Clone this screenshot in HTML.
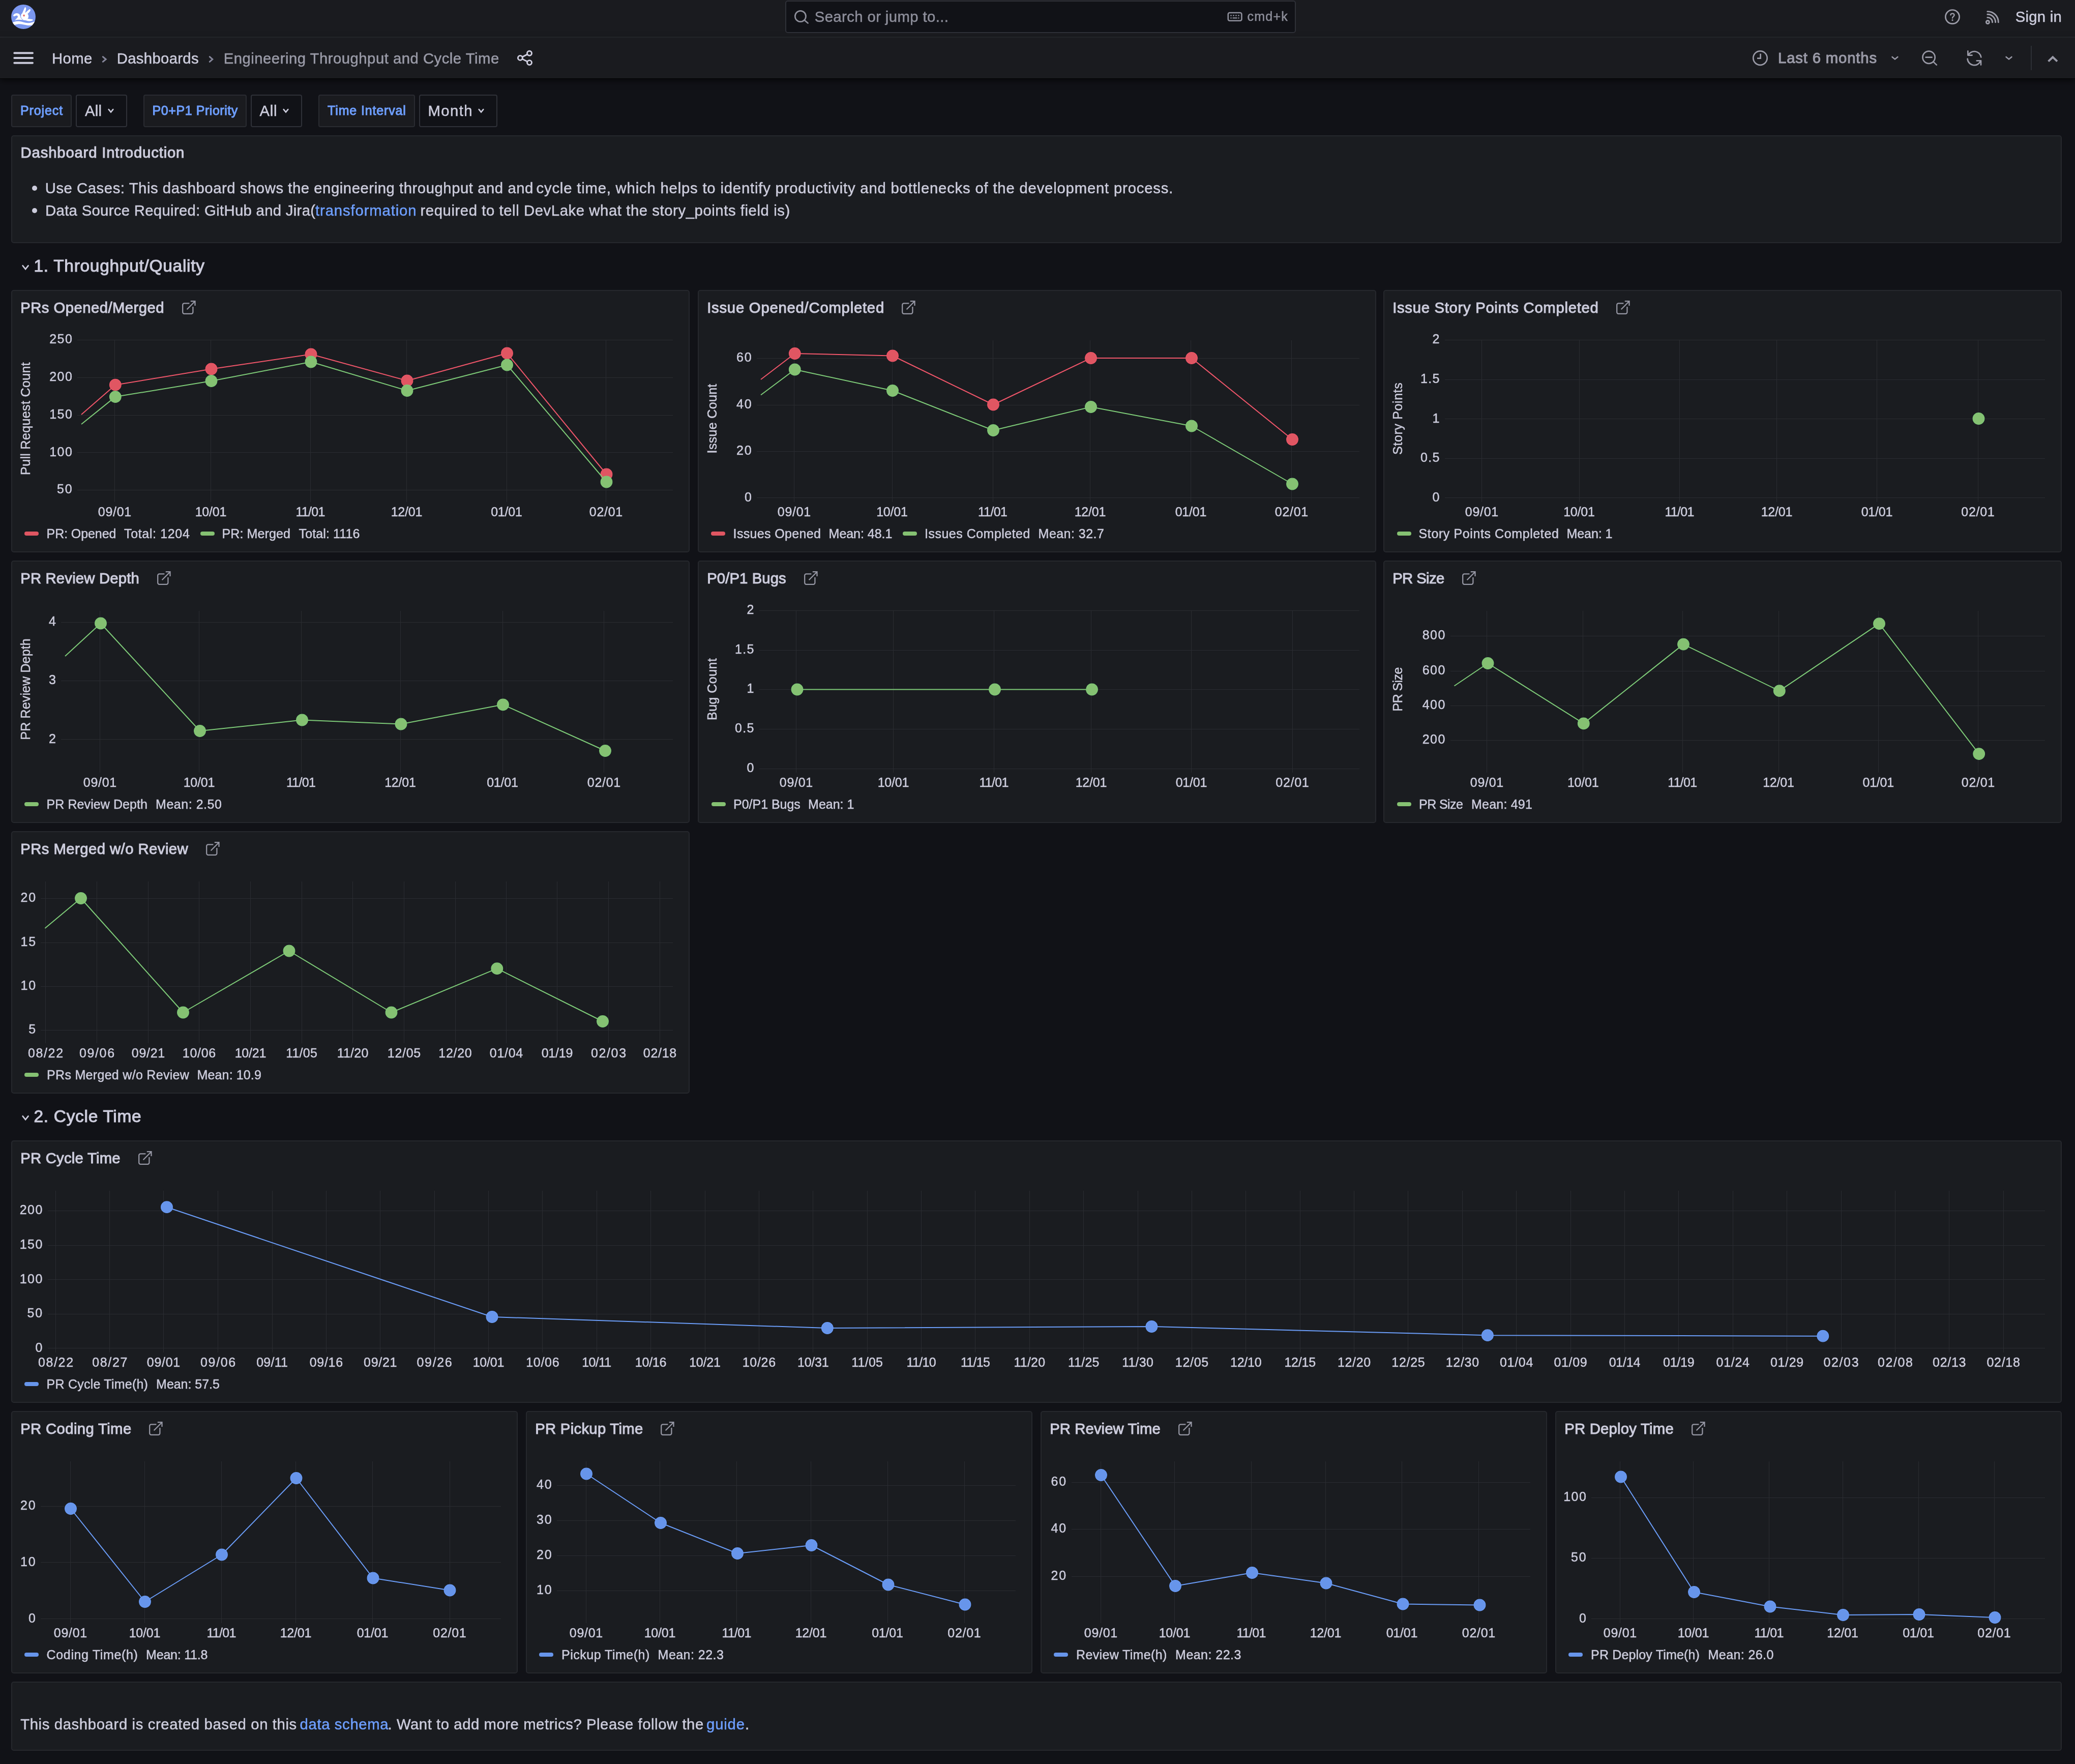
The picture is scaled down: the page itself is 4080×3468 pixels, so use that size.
<!DOCTYPE html>
<html lang="en"><head><meta charset="utf-8"><title>Engineering Throughput and Cycle Time - Dashboards - Grafana</title>
<meta name="viewport" content="width=4080">
<style>
html,body{margin:0;padding:0;background:#111217;}
body{width:4080px;height:3468px;overflow:hidden;position:relative;font-family:"Liberation Sans", sans-serif;color:#ccccdc;}
#app{position:absolute;left:0;top:0;width:4080px;height:3468px;overflow:hidden;will-change:transform;}
#app *{box-sizing:border-box;}
header,nav,section,.vars,.vl,.vv,.row,.search{position:absolute;}
.t{position:absolute;white-space:pre;margin:0;padding:0;font-weight:400;font-style:normal;-webkit-text-stroke:0.5px currentColor;}
.t.m{-webkit-text-stroke:1.05px currentColor;}
.ic,.g{position:absolute;overflow:visible;}
.g{left:0;top:0;}
.topbar{background:#1a1b1f;border-bottom:2px solid #27292e;}
.subbar{background:#1a1b1f;box-shadow:0 1px 0 #030304,0 5px 12px rgba(0,0,0,.6);}
.search{background:#111217;border:2px solid #2f3138;border-radius:5px;}
.panel{background:#1a1c20;border:2px solid #26282d;border-radius:5px;}
.vl{background:#1a1b1f;border:2px solid #292b31;border-radius:4px;}
.vv{background:#111217;border:2px solid #2f3138;border-radius:4px;}
.sw{position:absolute;width:28px;height:8px;border-radius:4px;}
.bul{position:absolute;width:10px;height:10px;border-radius:50%;background:#ccccdc;}
.vsep{position:absolute;width:2px;height:48px;background:#2d2f35;}
a.t{text-decoration:none;}
h2.t{font-size:inherit;}
</style></head>
<body><div id="app">
<header class="topbar" style="left:0px;top:0px;width:4080px;height:74px;">
<svg class="ic" style="left:22px;top:9px" width="48" height="48" viewBox="0 0 48 48">
<defs><clipPath id="lc"><circle cx="24" cy="24" r="24"/></clipPath></defs>
<circle cx="24" cy="24" r="24" fill="#7b97ef"/>
<g clip-path="url(#lc)" fill="#fff">
<path d="M21.6 17.2 L26.3 6.4 C27 4.6 28.6 5.2 29.1 6.8 C29.6 9 28.6 12.6 26.9 16.6 Z"/>
<path d="M27 16.8 L35.4 9.6 C37 8.4 38.4 9.6 37.8 11.4 C37 13.6 34.6 16 32 18.6 Z"/>
<ellipse cx="26.4" cy="23" rx="7.8" ry="7.4"/>
<path d="M4.2 20.8 C5.4 18.2 8.4 16.8 11.4 16.9 C14.6 17 17 18.8 17.4 21.6 C17.8 24.6 19.4 27.4 22.6 29.2 L26 27.6 L32.4 27.8 L42 29.2 C43 29.6 43 30.8 42 31.2 C38 32.8 34 32.8 30 31.6 C24 29.8 13.6 28.8 7.2 31 L12.6 25.2 C13.6 23.8 13 22 11 21.6 C9.4 21.4 8 22.4 6.8 23 C5 23.6 3.6 22.4 4.2 20.8 Z"/>
<path d="M1 36.4 C5 33.4 10.4 32.2 15.6 32.8 C21.6 33.6 27.4 36.4 33.4 36.2 C38 36 42.4 35 47 33 L47.5 39.4 C42.6 41 37 41.4 32 40.8 C25.6 40 19.4 37.6 13 38.4 C9.6 38.8 6.6 39.8 4 41 Z"/>
</g>
<path d="M19.07 20.47A7.8 7.4 0 0 0 23.1 29.71" fill="none" stroke="#7b97ef" stroke-width=".9"/>
<circle cx="25.1" cy="21.5" r="1.9" fill="#e8716f"/>
</svg>
<div class="search" style="left:1544px;top:1px;width:1004px;height:64px;">
<svg class="ic" style="left:10px;top:13px" width="40" height="36" viewBox="1556 16 40 36" ><path d="M1584.5 32A10.6 10.6 0 1 1 1563.3 32A10.6 10.6 0 1 1 1584.5 32M1581.6 39.4L1588.6 45.4" fill="none" stroke="#8e8f9b" stroke-width="2.7" stroke-linecap="round" stroke-linejoin="round" /></svg>
<span class="t" style="left:55.7px;top:12.4px;font-size:29.3px;line-height:35px;letter-spacing:0.40px;color:#8d8e9a;">Search or jump to...</span>
<svg class="ic" style="left:864px;top:17px" width="36" height="26" viewBox="2410 20 36 26" ><rect x="2414.8" y="25" width="26.6" height="15.8" rx="3" fill="none" stroke="#8e8f9b" stroke-width="2.6"/><rect x="2419.2" y="29.3" width="2.6" height="2.4" rx=".6" fill="#8e8f9b"/><rect x="2424.2" y="29.3" width="2.6" height="2.4" rx=".6" fill="#8e8f9b"/><rect x="2429.2" y="29.3" width="2.6" height="2.4" rx=".6" fill="#8e8f9b"/><rect x="2434.2" y="29.3" width="2.6" height="2.4" rx=".6" fill="#8e8f9b"/><rect x="2419.2" y="34.2" width="2.6" height="2.4" rx=".6" fill="#8e8f9b"/><rect x="2434.2" y="34.2" width="2.6" height="2.4" rx=".6" fill="#8e8f9b"/><rect x="2423.4" y="34.2" width="9.4" height="2.4" rx="1" fill="#8e8f9b"/></svg>
<span class="t" style="left:906.5px;top:14.2px;font-size:25.0px;line-height:30px;letter-spacing:1.25px;color:#8d8e9a;">cmd+k</span>
</div>
<svg class="ic" style="left:3820px;top:14px" width="38" height="38" viewBox="3820 14 38 38" ><circle cx="3839" cy="33.1" r="13.6" fill="none" stroke="#9c9ca8" stroke-width="2.7"/><path d="M3835.5 29.4C3835.5 25.6 3842.6 25.6 3842.6 29.7C3842.6 32.4 3839 32.5 3839 35.6" fill="none" stroke="#9c9ca8" stroke-width="2.4" stroke-linecap="round" stroke-linejoin="round" /><circle cx="3839" cy="39.6" r="1.55" fill="#9c9ca8"/></svg>
<svg class="ic" style="left:3900px;top:18px" width="36" height="34" viewBox="3900 18 36 34" ><circle cx="3908.4" cy="43.5" r="3" fill="none" stroke="#9c9ca8" stroke-width="2.9"/><path d="M3907.8 34.4A9.1 9.1 0 0 1 3917.5 43.9" fill="none" stroke="#9c9ca8" stroke-width="2.9" stroke-linecap="round" stroke-linejoin="round" /><path d="M3907.8 28.3A15.2 15.2 0 0 1 3923.6 43.9" fill="none" stroke="#9c9ca8" stroke-width="2.9" stroke-linecap="round" stroke-linejoin="round" /><path d="M3907.8 22.6A20.9 20.9 0 0 1 3929.3 43.9" fill="none" stroke="#9c9ca8" stroke-width="2.9" stroke-linecap="round" stroke-linejoin="round" /></svg>
<span class="t" style="left:3962.7px;top:14.9px;font-size:29.3px;line-height:35px;letter-spacing:0.26px;">Sign in</span>
</header>
<nav class="subbar" style="left:0px;top:74px;width:4080px;height:80px;">
<svg class="ic" style="left:24px;top:24px" width="46" height="32" viewBox="24 98 46 32" ><path d="M28.3 104.3H64M28.3 114H64M28.3 123.8H64" fill="none" stroke="#c9c9d9" stroke-width="4" stroke-linecap="round" stroke-linejoin="round" /></svg>
<span class="t" style="left:102.1px;top:22.6px;font-size:29.3px;line-height:35px;letter-spacing:0.33px;">Home</span>
<svg class="ic" style="left:198px;top:32px" width="16" height="20" viewBox="198 106 16 20" ><path d="M202.3 111.6L208.2 116.5L202.3 121.4" fill="none" stroke="#85869a" stroke-width="3" stroke-linecap="round" stroke-linejoin="miter"/></svg>
<span class="t" style="left:229.7px;top:22.6px;font-size:29.3px;line-height:35px;letter-spacing:0.33px;">Dashboards</span>
<svg class="ic" style="left:407px;top:32px" width="16" height="20" viewBox="407 106 16 20" ><path d="M412.3 111.6L417.8 116.5L412.3 121.4" fill="none" stroke="#85869a" stroke-width="3" stroke-linecap="round" stroke-linejoin="miter"/></svg>
<span class="t" style="left:439.7px;top:22.6px;font-size:29.3px;line-height:35px;letter-spacing:0.49px;color:#9a9ba8;">Engineering Throughput and Cycle Time</span>
<svg class="ic" style="left:1014px;top:22px" width="36" height="36" viewBox="1014 96 36 36" ><circle cx="1041" cy="104.8" r="4.5" fill="none" stroke="#d0cfe0" stroke-width="2.9"/><circle cx="1022.9" cy="113.9" r="4.5" fill="none" stroke="#d0cfe0" stroke-width="2.9"/><circle cx="1041" cy="123.1" r="4.5" fill="none" stroke="#d0cfe0" stroke-width="2.9"/><path d="M1027 111.9L1036.9 106.9M1027 116L1036.9 121" fill="none" stroke="#d0cfe0" stroke-width="2.9" stroke-linecap="round" stroke-linejoin="round" /></svg>
<svg class="ic" style="left:3444px;top:22px" width="36" height="36" viewBox="3444 96 36 36" ><circle cx="3461" cy="114.1" r="13.7" fill="none" stroke="#9a9aa7" stroke-width="2.7"/><path d="M3461.6 105.6V114.6H3455" fill="none" stroke="#9a9aa7" stroke-width="2.7"/></svg>
<span class="t m" style="left:3496.1px;top:22.4px;font-size:29.3px;line-height:35px;letter-spacing:0.83px;color:#9a9aa7;">Last 6 months</span>
<svg class="ic" style="left:3714px;top:32px" width="24" height="16" viewBox="3714 106 24 16" ><path d="M3720.6 111.9L3725.95 116.4L3731.3 111.9" fill="none" stroke="#9a9aa7" stroke-width="2.6" stroke-linecap="round" stroke-linejoin="miter"/></svg>
<svg class="ic" style="left:3776px;top:22px" width="36" height="36" viewBox="3776 96 36 36" ><circle cx="3792.6" cy="112.7" r="12.1" fill="none" stroke="#9a9aa7" stroke-width="2.7"/><path d="M3786.6 112.7H3798.6M3801.6 121.6L3807.8 127.6" fill="none" stroke="#9a9aa7" stroke-width="2.7" stroke-linecap="round" stroke-linejoin="round" /></svg>
<svg class="ic" style="left:3864px;top:22px" width="36" height="36" viewBox="3864 96 36 36" ><path d="M3869.4 100.4V108.6H3877.6" fill="none" stroke="#9a9aa7" stroke-width="2.7" stroke-linecap="round" stroke-linejoin="round" /><path d="M3895 127.6V119.4H3886.8" fill="none" stroke="#9a9aa7" stroke-width="2.7" stroke-linecap="round" stroke-linejoin="round" /><path d="M3870.2 108.2A13.4 13.4 0 0 1 3895.3 112.4" fill="none" stroke="#9a9aa7" stroke-width="2.7" stroke-linecap="round" stroke-linejoin="round" /><path d="M3868.6 115.6A13.4 13.4 0 0 0 3894.4 119.8" fill="none" stroke="#9a9aa7" stroke-width="2.7" stroke-linecap="round" stroke-linejoin="round" /></svg>
<svg class="ic" style="left:3938px;top:32px" width="24" height="16" viewBox="3938 106 24 16" ><path d="M3944.6 111.9L3950 116.4L3955.4 111.9" fill="none" stroke="#9a9aa7" stroke-width="2.6" stroke-linecap="round" stroke-linejoin="miter"/></svg>
<i class="vsep" style="left:3992.5px;top:16px"></i>
<svg class="ic" style="left:4022px;top:30px" width="30" height="24" viewBox="4022 104 30 24" ><path d="M4027.6 120.6L4036.3 112.2L4045 120.6" fill="none" stroke="#9a9aa7" stroke-width="4" stroke-linejoin="miter"/></svg>
</nav>
<div class="vars" style="left:0px;top:186px;width:4080px;height:64px;">
<div class="vl" style="left:22px;top:0px;width:119px;height:64px;">
<span class="t m" style="left:16.0px;top:13.9px;font-size:25.0px;line-height:30px;letter-spacing:0.89px;color:#6e9fff;">Project</span>
</div>
<div class="vv" style="left:149px;top:0px;width:101px;height:64px;">
<span class="t" style="left:16.0px;top:12.3px;font-size:29.3px;line-height:35px;letter-spacing:0.24px;">All</span>
<svg class="ic" style="left:57px;top:20px" width="20" height="18" viewBox="208 208 20 18" ><path d="M213.7 215.1L218 220.4L222.3 215.1" fill="none" stroke="#ccccdc" stroke-width="2.6" stroke-linecap="round" stroke-linejoin="miter"/></svg>
</div>
<div class="vl" style="left:282px;top:0px;width:203px;height:64px;">
<span class="t m" style="left:15.6px;top:13.9px;font-size:25.0px;line-height:30px;letter-spacing:0.56px;color:#6e9fff;">P0+P1 Priority</span>
</div>
<div class="vv" style="left:493px;top:0px;width:101px;height:64px;">
<span class="t" style="left:15.5px;top:12.3px;font-size:29.3px;line-height:35px;letter-spacing:0.74px;">All</span>
<svg class="ic" style="left:57px;top:20px" width="20" height="18" viewBox="552 208 20 18" ><path d="M557.7 215.1L562 220.4L566.3 215.1" fill="none" stroke="#ccccdc" stroke-width="2.6" stroke-linecap="round" stroke-linejoin="miter"/></svg>
</div>
<div class="vl" style="left:626px;top:0px;width:190px;height:64px;">
<span class="t m" style="left:16.1px;top:13.9px;font-size:25.0px;line-height:30px;letter-spacing:0.85px;color:#6e9fff;">Time Interval</span>
</div>
<div class="vv" style="left:824px;top:0px;width:154px;height:64px;">
<span class="t" style="left:15.5px;top:12.3px;font-size:29.3px;line-height:35px;letter-spacing:1.40px;">Month</span>
<svg class="ic" style="left:110px;top:20px" width="20" height="18" viewBox="936 208 20 18" ><path d="M941.7 215.1L946 220.4L950.3 215.1" fill="none" stroke="#ccccdc" stroke-width="2.6" stroke-linecap="round" stroke-linejoin="miter"/></svg>
</div>
</div>
<section class="panel" style="left:22px;top:266px;width:4032px;height:212px;">
<h2 class="t m pt" style="left:16.6px;top:14.2px;font-size:29.3px;line-height:35px;letter-spacing:0.82px;">Dashboard Introduction</h2>
<i class="bul" style="left:39px;top:97.2px"></i>
<i class="bul" style="left:39px;top:141.3px"></i>
<span class="t" style="left:64.7px;top:84.1px;font-size:29.3px;line-height:35px;letter-spacing:0.54px;">Use Cases: This dashboard shows the engineering throughput and and</span>
<span class="t" style="left:1030.5px;top:84.1px;font-size:29.3px;line-height:35px;letter-spacing:0.80px;">cycle time, which helps to identify productivity and bottlenecks of the development process.</span>
<span class="t" style="left:65.1px;top:127.9px;font-size:29.3px;line-height:35px;letter-spacing:0.31px;">Data Source Required: GitHub and Jira(</span>
<a class="t" href="#" style="left:596.0px;top:127.9px;font-size:29.3px;line-height:35px;letter-spacing:0.87px;color:#6e9fff;">transformation</a>
<span class="t" style="left:802.5px;top:127.9px;font-size:29.3px;line-height:35px;letter-spacing:0.57px;">required to tell DevLake what the story_points field is)</span>
</section>
<div class="row" style="left:22px;top:494px;width:4032px;height:60px;">
<svg class="ic" style="left:16px;top:22px" width="24" height="20" viewBox="38 516 24 20" ><path d="M44.7 522.3L50.1 529L55.5 522.3" fill="none" stroke="#ccccdc" stroke-width="2.7" stroke-linecap="round" stroke-linejoin="miter"/></svg>
<span class="t m" style="left:44.4px;top:9.1px;font-size:33.5px;line-height:40px;letter-spacing:0.70px;">1. Throughput/Quality</span>
</div>
<section class="panel" style="left:22px;top:570px;width:1334px;height:516px;">
<h2 class="t m pt" style="left:16.2px;top:14.6px;font-size:29.3px;line-height:35px;letter-spacing:0.45px;">PRs Opened/Merged</h2>
<svg class="ic" style="left:333.7px;top:18.6px" width="28" height="28" viewBox="0 0 28 28"><path d="M14.4 5.4H4.3A3.1 3.1 0 0 0 1.2 8.5V22.7A3.1 3.1 0 0 0 4.3 25.8H18.3A3.1 3.1 0 0 0 21.4 22.7V11.9M16.8 1.2H25.5V9.9M25.5 1.2L9.6 17.3" fill="none" stroke="#9697a4" stroke-width="2.25" stroke-linejoin="miter"/></svg>
<svg class="g" width="1330" height="512" viewBox="24 572 1330 512" ><path d="M152 668.5H1322.5M152 742.5H1322.5M152 816.5H1322.5M152 889.5H1322.5M152 963.5H1322.5M225.5 668.5V986.5M414.5 668.5V986.5M610.5 668.5V986.5M799.5 668.5V986.5M996.5 668.5V986.5M1191.5 668.5V986.5" stroke="#2a2c31" stroke-width="1" fill="none" shape-rendering="crispEdges"/><path d="M160 815L226.8 756.7L415.5 725.5L611.5 696.5L800.5 748.5L997 694.5L1192.5 932.5" stroke="#f0566a" stroke-width="2" fill="none" stroke-linejoin="round"/><circle cx="226.8" cy="756.7" r="11.3" fill="#e05662" stroke="#f0566a" stroke-width="1.2"/><circle cx="415.5" cy="725.5" r="11.3" fill="#e05662" stroke="#f0566a" stroke-width="1.2"/><circle cx="611.5" cy="696.5" r="11.3" fill="#e05662" stroke="#f0566a" stroke-width="1.2"/><circle cx="800.5" cy="748.5" r="11.3" fill="#e05662" stroke="#f0566a" stroke-width="1.2"/><circle cx="997" cy="694.5" r="11.3" fill="#e05662" stroke="#f0566a" stroke-width="1.2"/><circle cx="1192.5" cy="932.5" r="11.3" fill="#e05662" stroke="#f0566a" stroke-width="1.2"/><path d="M160 834L226.8 780.1L415.5 749L611.5 711.5L800.5 768L997 717.5L1192.5 947.5" stroke="#7ecb78" stroke-width="2" fill="none" stroke-linejoin="round"/><circle cx="226.8" cy="780.1" r="11.3" fill="#85c172" stroke="#7ecb78" stroke-width="1.2"/><circle cx="415.5" cy="749" r="11.3" fill="#85c172" stroke="#7ecb78" stroke-width="1.2"/><circle cx="611.5" cy="711.5" r="11.3" fill="#85c172" stroke="#7ecb78" stroke-width="1.2"/><circle cx="800.5" cy="768" r="11.3" fill="#85c172" stroke="#7ecb78" stroke-width="1.2"/><circle cx="997" cy="717.5" r="11.3" fill="#85c172" stroke="#7ecb78" stroke-width="1.2"/><circle cx="1192.5" cy="947.5" r="11.3" fill="#85c172" stroke="#7ecb78" stroke-width="1.2"/></svg>
<span class="t" style="left:73.2px;top:79.3px;font-size:25.0px;line-height:30px;letter-spacing:1.46px;">250</span>
<span class="t" style="left:73.2px;top:153.0px;font-size:25.0px;line-height:30px;letter-spacing:1.46px;">200</span>
<span class="t" style="left:73.2px;top:226.8px;font-size:25.0px;line-height:30px;letter-spacing:1.46px;">150</span>
<span class="t" style="left:73.2px;top:300.5px;font-size:25.0px;line-height:30px;letter-spacing:1.46px;">100</span>
<span class="t" style="left:88.0px;top:374.2px;font-size:25.0px;line-height:30px;letter-spacing:1.95px;">50</span>
<span class="t" style="left:168.8px;top:419.4px;font-size:25.0px;line-height:30px;letter-spacing:0.70px;">09/01</span>
<span class="t" style="left:359.7px;top:419.4px;font-size:25.0px;line-height:30px;letter-spacing:-0.23px;">10/01</span>
<span class="t" style="left:557.5px;top:419.4px;font-size:25.0px;line-height:30px;letter-spacing:-0.69px;">11/01</span>
<span class="t" style="left:744.7px;top:419.4px;font-size:25.0px;line-height:30px;letter-spacing:-0.23px;">12/01</span>
<span class="t" style="left:941.2px;top:419.4px;font-size:25.0px;line-height:30px;letter-spacing:-0.23px;">01/01</span>
<span class="t" style="left:1134.8px;top:419.4px;font-size:25.0px;line-height:30px;letter-spacing:0.70px;">02/01</span>
<span class="t" style="left:-84.9px;top:236.0px;width:221.8px;font-size:25.0px;line-height:30px;letter-spacing:0.37px;transform:rotate(-90deg);">Pull Request Count</span>
<i class="sw" style="left:23.8px;top:473px;background:#e05662"></i>
<span class="t" style="left:67.6px;top:461.6px;font-size:25.0px;line-height:30px;letter-spacing:-0.09px;">PR: Opened</span>
<span class="t" style="left:220.1px;top:461.6px;font-size:25.0px;line-height:30px;letter-spacing:0.64px;">Total: 1204</span>
<i class="sw" style="left:369.5px;top:473px;background:#85c172"></i>
<span class="t" style="left:412.6px;top:461.6px;font-size:25.0px;line-height:30px;letter-spacing:0.10px;">PR: Merged</span>
<span class="t" style="left:563.6px;top:461.6px;font-size:25.0px;line-height:30px;letter-spacing:0.11px;">Total: 1116</span>
</section>
<section class="panel" style="left:1372px;top:570px;width:1334px;height:516px;">
<h2 class="t m pt" style="left:16.2px;top:14.6px;font-size:29.3px;line-height:35px;letter-spacing:0.75px;">Issue Opened/Completed</h2>
<svg class="ic" style="left:399.4px;top:18.6px" width="28" height="28" viewBox="0 0 28 28"><path d="M14.4 5.4H4.3A3.1 3.1 0 0 0 1.2 8.5V22.7A3.1 3.1 0 0 0 4.3 25.8H18.3A3.1 3.1 0 0 0 21.4 22.7V11.9M16.8 1.2H25.5V9.9M25.5 1.2L9.6 17.3" fill="none" stroke="#9697a4" stroke-width="2.25" stroke-linejoin="miter"/></svg>
<svg class="g" width="1330" height="512" viewBox="1374 572 1330 512" ><path d="M1488 704.5H2673M1488 796.5H2673M1488 887.5H2673M1488 978.5H2673M1561.5 668.5V986.5M1754.5 668.5V986.5M1952.5 668.5V986.5M2143.5 668.5V986.5M2341.5 668.5V986.5M2539.5 668.5V986.5" stroke="#2a2c31" stroke-width="1" fill="none" shape-rendering="crispEdges"/><path d="M1496 746L1562.8 695L1755 699.5L1953 795.5L2145 704L2343 704L2541 864" stroke="#f0566a" stroke-width="2" fill="none" stroke-linejoin="round"/><circle cx="1562.8" cy="695" r="11.3" fill="#e05662" stroke="#f0566a" stroke-width="1.2"/><circle cx="1755" cy="699.5" r="11.3" fill="#e05662" stroke="#f0566a" stroke-width="1.2"/><circle cx="1953" cy="795.5" r="11.3" fill="#e05662" stroke="#f0566a" stroke-width="1.2"/><circle cx="2145" cy="704" r="11.3" fill="#e05662" stroke="#f0566a" stroke-width="1.2"/><circle cx="2343" cy="704" r="11.3" fill="#e05662" stroke="#f0566a" stroke-width="1.2"/><circle cx="2541" cy="864" r="11.3" fill="#e05662" stroke="#f0566a" stroke-width="1.2"/><path d="M1496 776.5L1562.8 726.5L1755 768L1953 846L2145 800L2343 837.5L2541 951.5" stroke="#7ecb78" stroke-width="2" fill="none" stroke-linejoin="round"/><circle cx="1562.8" cy="726.5" r="11.3" fill="#85c172" stroke="#7ecb78" stroke-width="1.2"/><circle cx="1755" cy="768" r="11.3" fill="#85c172" stroke="#7ecb78" stroke-width="1.2"/><circle cx="1953" cy="846" r="11.3" fill="#85c172" stroke="#7ecb78" stroke-width="1.2"/><circle cx="2145" cy="800" r="11.3" fill="#85c172" stroke="#7ecb78" stroke-width="1.2"/><circle cx="2343" cy="837.5" r="11.3" fill="#85c172" stroke="#7ecb78" stroke-width="1.2"/><circle cx="2541" cy="951.5" r="11.3" fill="#85c172" stroke="#7ecb78" stroke-width="1.2"/></svg>
<span class="t" style="left:74.0px;top:115.1px;font-size:25.0px;line-height:30px;letter-spacing:1.95px;">60</span>
<span class="t" style="left:74.0px;top:206.8px;font-size:25.0px;line-height:30px;letter-spacing:1.95px;">40</span>
<span class="t" style="left:74.0px;top:298.3px;font-size:25.0px;line-height:30px;letter-spacing:1.95px;">20</span>
<span class="t" style="left:89.9px;top:389.5px;font-size:25.0px;line-height:30px;letter-spacing:0.00px;">0</span>
<span class="t" style="left:154.8px;top:419.4px;font-size:25.0px;line-height:30px;letter-spacing:0.70px;">09/01</span>
<span class="t" style="left:349.2px;top:419.4px;font-size:25.0px;line-height:30px;letter-spacing:-0.23px;">10/01</span>
<span class="t" style="left:549.0px;top:419.4px;font-size:25.0px;line-height:30px;letter-spacing:-0.69px;">11/01</span>
<span class="t" style="left:738.7px;top:419.4px;font-size:25.0px;line-height:30px;letter-spacing:-0.23px;">12/01</span>
<span class="t" style="left:936.7px;top:419.4px;font-size:25.0px;line-height:30px;letter-spacing:-0.23px;">01/01</span>
<span class="t" style="left:1132.8px;top:419.4px;font-size:25.0px;line-height:30px;letter-spacing:0.70px;">02/01</span>
<span class="t" style="left:-42.4px;top:236.0px;width:136.8px;font-size:25.0px;line-height:30px;letter-spacing:0.33px;transform:rotate(-90deg);">Issue Count</span>
<i class="sw" style="left:24px;top:473px;background:#e05662"></i>
<span class="t" style="left:67.6px;top:461.6px;font-size:25.0px;line-height:30px;letter-spacing:0.34px;">Issues Opened</span>
<span class="t" style="left:255.6px;top:461.6px;font-size:25.0px;line-height:30px;letter-spacing:-0.04px;">Mean: 48.1</span>
<i class="sw" style="left:400.5px;top:473px;background:#85c172"></i>
<span class="t" style="left:444.1px;top:461.6px;font-size:25.0px;line-height:30px;letter-spacing:0.48px;">Issues Completed</span>
<span class="t" style="left:667.6px;top:461.6px;font-size:25.0px;line-height:30px;letter-spacing:0.46px;">Mean: 32.7</span>
</section>
<section class="panel" style="left:2720px;top:570px;width:1334px;height:516px;">
<h2 class="t m pt" style="left:16.2px;top:14.6px;font-size:29.3px;line-height:35px;letter-spacing:0.69px;">Issue Story Points Completed</h2>
<svg class="ic" style="left:455.9px;top:18.6px" width="28" height="28" viewBox="0 0 28 28"><path d="M14.4 5.4H4.3A3.1 3.1 0 0 0 1.2 8.5V22.7A3.1 3.1 0 0 0 4.3 25.8H18.3A3.1 3.1 0 0 0 21.4 22.7V11.9M16.8 1.2H25.5V9.9M25.5 1.2L9.6 17.3" fill="none" stroke="#9697a4" stroke-width="2.25" stroke-linejoin="miter"/></svg>
<svg class="g" width="1330" height="512" viewBox="2722 572 1330 512" ><path d="M2840.5 668.5H4021M2840.5 746.5H4021M2840.5 823.5H4021M2840.5 901.5H4021M2840.5 978.5H4021M2913.5 668.5V986.5M3105.5 668.5V986.5M3302.5 668.5V986.5M3493.5 668.5V986.5M3690.5 668.5V986.5M3889.5 668.5V986.5" stroke="#2a2c31" stroke-width="1" fill="none" shape-rendering="crispEdges"/><circle cx="3890.5" cy="823" r="11.3" fill="#85c172" stroke="#7ecb78" stroke-width="1.2"/></svg>
<span class="t" style="left:94.4px;top:79.4px;font-size:25.0px;line-height:30px;letter-spacing:0.00px;">2</span>
<span class="t" style="left:71.1px;top:157.3px;font-size:25.0px;line-height:30px;letter-spacing:1.22px;">1.5</span>
<span class="t" style="left:94.4px;top:234.5px;font-size:25.0px;line-height:30px;letter-spacing:0.00px;">1</span>
<span class="t" style="left:71.1px;top:312.3px;font-size:25.0px;line-height:30px;letter-spacing:1.22px;">0.5</span>
<span class="t" style="left:94.4px;top:389.7px;font-size:25.0px;line-height:30px;letter-spacing:0.00px;">0</span>
<span class="t" style="left:158.8px;top:419.4px;font-size:25.0px;line-height:30px;letter-spacing:0.70px;">09/01</span>
<span class="t" style="left:352.2px;top:419.4px;font-size:25.0px;line-height:30px;letter-spacing:-0.23px;">10/01</span>
<span class="t" style="left:551.5px;top:419.4px;font-size:25.0px;line-height:30px;letter-spacing:-0.69px;">11/01</span>
<span class="t" style="left:740.7px;top:419.4px;font-size:25.0px;line-height:30px;letter-spacing:-0.23px;">12/01</span>
<span class="t" style="left:937.7px;top:419.4px;font-size:25.0px;line-height:30px;letter-spacing:-0.23px;">01/01</span>
<span class="t" style="left:1134.3px;top:419.4px;font-size:25.0px;line-height:30px;letter-spacing:0.70px;">02/01</span>
<span class="t" style="left:-44.9px;top:236.0px;width:141.8px;font-size:25.0px;line-height:30px;letter-spacing:0.63px;transform:rotate(-90deg);">Story Points</span>
<i class="sw" style="left:24.5px;top:473px;background:#85c172"></i>
<span class="t" style="left:67.6px;top:461.6px;font-size:25.0px;line-height:30px;letter-spacing:0.60px;">Story Points Completed</span>
<span class="t" style="left:358.6px;top:461.6px;font-size:25.0px;line-height:30px;letter-spacing:-0.10px;">Mean: 1</span>
</section>
<section class="panel" style="left:22px;top:1102px;width:1334px;height:516px;">
<h2 class="t m pt" style="left:16.2px;top:14.6px;font-size:29.3px;line-height:35px;letter-spacing:0.17px;">PR Review Depth</h2>
<svg class="ic" style="left:284.9px;top:18.6px" width="28" height="28" viewBox="0 0 28 28"><path d="M14.4 5.4H4.3A3.1 3.1 0 0 0 1.2 8.5V22.7A3.1 3.1 0 0 0 4.3 25.8H18.3A3.1 3.1 0 0 0 21.4 22.7V11.9M16.8 1.2H25.5V9.9M25.5 1.2L9.6 17.3" fill="none" stroke="#9697a4" stroke-width="2.25" stroke-linejoin="miter"/></svg>
<svg class="g" width="1330" height="512" viewBox="24 1104 1330 512" ><path d="M120 1223.5H1322.5M120 1338.5H1322.5M120 1453.5H1322.5M196.5 1200.5V1518.5M391.5 1200.5V1518.5M592.5 1200.5V1518.5M787.5 1200.5V1518.5M988.5 1200.5V1518.5M1187.5 1200.5V1518.5" stroke="#2a2c31" stroke-width="1" fill="none" shape-rendering="crispEdges"/><path d="M128 1290L198 1225.5L393 1437L594 1415.5L788.5 1423.5L989 1385.3L1190 1476" stroke="#7ecb78" stroke-width="2" fill="none" stroke-linejoin="round"/><circle cx="198" cy="1225.5" r="11.3" fill="#85c172" stroke="#7ecb78" stroke-width="1.2"/><circle cx="393" cy="1437" r="11.3" fill="#85c172" stroke="#7ecb78" stroke-width="1.2"/><circle cx="594" cy="1415.5" r="11.3" fill="#85c172" stroke="#7ecb78" stroke-width="1.2"/><circle cx="788.5" cy="1423.5" r="11.3" fill="#85c172" stroke="#7ecb78" stroke-width="1.2"/><circle cx="989" cy="1385.3" r="11.3" fill="#85c172" stroke="#7ecb78" stroke-width="1.2"/><circle cx="1190" cy="1476" r="11.3" fill="#85c172" stroke="#7ecb78" stroke-width="1.2"/></svg>
<span class="t" style="left:71.9px;top:101.8px;font-size:25.0px;line-height:30px;letter-spacing:0.00px;">4</span>
<span class="t" style="left:71.9px;top:217.3px;font-size:25.0px;line-height:30px;letter-spacing:0.00px;">3</span>
<span class="t" style="left:71.9px;top:332.5px;font-size:25.0px;line-height:30px;letter-spacing:0.00px;">2</span>
<span class="t" style="left:139.8px;top:419.4px;font-size:25.0px;line-height:30px;letter-spacing:0.70px;">09/01</span>
<span class="t" style="left:336.7px;top:419.4px;font-size:25.0px;line-height:30px;letter-spacing:-0.23px;">10/01</span>
<span class="t" style="left:539.0px;top:419.4px;font-size:25.0px;line-height:30px;letter-spacing:-0.69px;">11/01</span>
<span class="t" style="left:732.2px;top:419.4px;font-size:25.0px;line-height:30px;letter-spacing:-0.23px;">12/01</span>
<span class="t" style="left:933.2px;top:419.4px;font-size:25.0px;line-height:30px;letter-spacing:-0.23px;">01/01</span>
<span class="t" style="left:1130.8px;top:419.4px;font-size:25.0px;line-height:30px;letter-spacing:0.70px;">02/01</span>
<span class="t" style="left:-73.6px;top:236.0px;width:199.2px;font-size:25.0px;line-height:30px;letter-spacing:0.14px;transform:rotate(-90deg);">PR Review Depth</span>
<i class="sw" style="left:23.8px;top:473px;background:#85c172"></i>
<span class="t" style="left:67.6px;top:461.6px;font-size:25.0px;line-height:30px;letter-spacing:0.07px;">PR Review Depth</span>
<span class="t" style="left:282.1px;top:461.6px;font-size:25.0px;line-height:30px;letter-spacing:0.52px;">Mean: 2.50</span>
</section>
<section class="panel" style="left:1372px;top:1102px;width:1334px;height:516px;">
<h2 class="t m pt" style="left:16.2px;top:14.6px;font-size:29.3px;line-height:35px;letter-spacing:0.09px;">P0/P1 Bugs</h2>
<svg class="ic" style="left:206.9px;top:18.6px" width="28" height="28" viewBox="0 0 28 28"><path d="M14.4 5.4H4.3A3.1 3.1 0 0 0 1.2 8.5V22.7A3.1 3.1 0 0 0 4.3 25.8H18.3A3.1 3.1 0 0 0 21.4 22.7V11.9M16.8 1.2H25.5V9.9M25.5 1.2L9.6 17.3" fill="none" stroke="#9697a4" stroke-width="2.25" stroke-linejoin="miter"/></svg>
<svg class="g" width="1330" height="512" viewBox="1374 1104 1330 512" ><path d="M1492.5 1200.5H2673M1492.5 1278.5H2673M1492.5 1355.5H2673M1492.5 1433.5H2673M1492.5 1511.5H2673M1565.5 1200.5V1518.5M1756.5 1200.5V1518.5M1954.5 1200.5V1518.5M2145.5 1200.5V1518.5M2342.5 1200.5V1518.5M2541.5 1200.5V1518.5" stroke="#2a2c31" stroke-width="1" fill="none" shape-rendering="crispEdges"/><path d="M1567.5 1355.5L1956 1355.5L2147 1355.5" stroke="#7ecb78" stroke-width="2" fill="none" stroke-linejoin="round"/><circle cx="1567.5" cy="1355.5" r="11.3" fill="#85c172" stroke="#7ecb78" stroke-width="1.2"/><circle cx="1956" cy="1355.5" r="11.3" fill="#85c172" stroke="#7ecb78" stroke-width="1.2"/><circle cx="2147" cy="1355.5" r="11.3" fill="#85c172" stroke="#7ecb78" stroke-width="1.2"/></svg>
<span class="t" style="left:94.4px;top:79.3px;font-size:25.0px;line-height:30px;letter-spacing:0.00px;">2</span>
<span class="t" style="left:71.1px;top:157.0px;font-size:25.0px;line-height:30px;letter-spacing:1.22px;">1.5</span>
<span class="t" style="left:94.4px;top:234.4px;font-size:25.0px;line-height:30px;letter-spacing:0.00px;">1</span>
<span class="t" style="left:71.1px;top:312.3px;font-size:25.0px;line-height:30px;letter-spacing:1.22px;">0.5</span>
<span class="t" style="left:94.4px;top:389.8px;font-size:25.0px;line-height:30px;letter-spacing:0.00px;">0</span>
<span class="t" style="left:158.8px;top:419.4px;font-size:25.0px;line-height:30px;letter-spacing:0.70px;">09/01</span>
<span class="t" style="left:351.7px;top:419.4px;font-size:25.0px;line-height:30px;letter-spacing:-0.23px;">10/01</span>
<span class="t" style="left:551.5px;top:419.4px;font-size:25.0px;line-height:30px;letter-spacing:-0.69px;">11/01</span>
<span class="t" style="left:740.7px;top:419.4px;font-size:25.0px;line-height:30px;letter-spacing:-0.23px;">12/01</span>
<span class="t" style="left:937.7px;top:419.4px;font-size:25.0px;line-height:30px;letter-spacing:-0.23px;">01/01</span>
<span class="t" style="left:1134.3px;top:419.4px;font-size:25.0px;line-height:30px;letter-spacing:0.70px;">02/01</span>
<span class="t" style="left:-34.9px;top:236.0px;width:121.8px;font-size:25.0px;line-height:30px;letter-spacing:0.45px;transform:rotate(-90deg);">Bug Count</span>
<i class="sw" style="left:24.5px;top:473px;background:#85c172"></i>
<span class="t" style="left:68.1px;top:461.6px;font-size:25.0px;line-height:30px;letter-spacing:-0.03px;">P0/P1 Bugs</span>
<span class="t" style="left:215.1px;top:461.6px;font-size:25.0px;line-height:30px;letter-spacing:-0.02px;">Mean: 1</span>
</section>
<section class="panel" style="left:2720px;top:1102px;width:1334px;height:516px;">
<h2 class="t m pt" style="left:16.2px;top:14.6px;font-size:29.3px;line-height:35px;letter-spacing:-0.63px;">PR Size</h2>
<svg class="ic" style="left:153.4px;top:18.6px" width="28" height="28" viewBox="0 0 28 28"><path d="M14.4 5.4H4.3A3.1 3.1 0 0 0 1.2 8.5V22.7A3.1 3.1 0 0 0 4.3 25.8H18.3A3.1 3.1 0 0 0 21.4 22.7V11.9M16.8 1.2H25.5V9.9M25.5 1.2L9.6 17.3" fill="none" stroke="#9697a4" stroke-width="2.25" stroke-linejoin="miter"/></svg>
<svg class="g" width="1330" height="512" viewBox="2722 1104 1330 512" ><path d="M2851.5 1250.5H4020.5M2851.5 1319.5H4020.5M2851.5 1387.5H4020.5M2851.5 1455.5H4020.5M2923.5 1200.5V1518.5M3112.5 1200.5V1518.5M3308.5 1200.5V1518.5M3497.5 1200.5V1518.5M3693.5 1200.5V1518.5M3889.5 1200.5V1518.5" stroke="#2a2c31" stroke-width="1" fill="none" shape-rendering="crispEdges"/><path d="M2859.5 1348.5L2925.5 1304L3113.8 1422.4L3310 1266.6L3498.8 1358.2L3695 1226.2L3891.2 1482.1" stroke="#7ecb78" stroke-width="2" fill="none" stroke-linejoin="round"/><circle cx="2925.5" cy="1304" r="11.3" fill="#85c172" stroke="#7ecb78" stroke-width="1.2"/><circle cx="3113.8" cy="1422.4" r="11.3" fill="#85c172" stroke="#7ecb78" stroke-width="1.2"/><circle cx="3310" cy="1266.6" r="11.3" fill="#85c172" stroke="#7ecb78" stroke-width="1.2"/><circle cx="3498.8" cy="1358.2" r="11.3" fill="#85c172" stroke="#7ecb78" stroke-width="1.2"/><circle cx="3695" cy="1226.2" r="11.3" fill="#85c172" stroke="#7ecb78" stroke-width="1.2"/><circle cx="3891.2" cy="1482.1" r="11.3" fill="#85c172" stroke="#7ecb78" stroke-width="1.2"/></svg>
<span class="t" style="left:74.7px;top:129.4px;font-size:25.0px;line-height:30px;letter-spacing:1.46px;">800</span>
<span class="t" style="left:74.7px;top:197.8px;font-size:25.0px;line-height:30px;letter-spacing:1.46px;">600</span>
<span class="t" style="left:74.7px;top:266.0px;font-size:25.0px;line-height:30px;letter-spacing:1.46px;">400</span>
<span class="t" style="left:74.7px;top:334.4px;font-size:25.0px;line-height:30px;letter-spacing:1.46px;">200</span>
<span class="t" style="left:168.8px;top:419.4px;font-size:25.0px;line-height:30px;letter-spacing:0.70px;">09/01</span>
<span class="t" style="left:359.9px;top:419.4px;font-size:25.0px;line-height:30px;letter-spacing:-0.23px;">10/01</span>
<span class="t" style="left:557.3px;top:419.4px;font-size:25.0px;line-height:30px;letter-spacing:-0.69px;">11/01</span>
<span class="t" style="left:744.2px;top:419.4px;font-size:25.0px;line-height:30px;letter-spacing:-0.23px;">12/01</span>
<span class="t" style="left:940.5px;top:419.4px;font-size:25.0px;line-height:30px;letter-spacing:-0.23px;">01/01</span>
<span class="t" style="left:1134.8px;top:419.4px;font-size:25.0px;line-height:30px;letter-spacing:0.70px;">02/01</span>
<span class="t" style="left:-17.4px;top:236.0px;width:86.8px;font-size:25.0px;line-height:30px;letter-spacing:-0.59px;transform:rotate(-90deg);">PR Size</span>
<i class="sw" style="left:24.5px;top:473px;background:#85c172"></i>
<span class="t" style="left:68.1px;top:461.6px;font-size:25.0px;line-height:30px;letter-spacing:-0.59px;">PR Size</span>
<span class="t" style="left:171.1px;top:461.6px;font-size:25.0px;line-height:30px;letter-spacing:0.20px;">Mean: 491</span>
</section>
<section class="panel" style="left:22px;top:1634px;width:1334px;height:516px;">
<h2 class="t m pt" style="left:16.2px;top:14.6px;font-size:29.3px;line-height:35px;letter-spacing:0.44px;">PRs Merged w/o Review</h2>
<svg class="ic" style="left:380.9px;top:18.6px" width="28" height="28" viewBox="0 0 28 28"><path d="M14.4 5.4H4.3A3.1 3.1 0 0 0 1.2 8.5V22.7A3.1 3.1 0 0 0 4.3 25.8H18.3A3.1 3.1 0 0 0 21.4 22.7V11.9M16.8 1.2H25.5V9.9M25.5 1.2L9.6 17.3" fill="none" stroke="#9697a4" stroke-width="2.25" stroke-linejoin="miter"/></svg>
<svg class="g" width="1330" height="512" viewBox="24 1636 1330 512" ><path d="M80.4 1766.5H1323M80.4 1853.5H1323M80.4 1939.5H1323M80.4 2025.5H1323M89.5 1732.5V2050.5M190.5 1732.5V2050.5M291.5 1732.5V2050.5M391.5 1732.5V2050.5M492.5 1732.5V2050.5M593.5 1732.5V2050.5M693.5 1732.5V2050.5M794.5 1732.5V2050.5M895.5 1732.5V2050.5M995.5 1732.5V2050.5M1095.5 1732.5V2050.5M1196.5 1732.5V2050.5M1297.5 1732.5V2050.5" stroke="#2a2c31" stroke-width="1" fill="none" shape-rendering="crispEdges"/><path d="M88.4 1825L159 1766L360 1990.5L568.5 1869.5L769.5 1990.5L977.3 1904.2L1185 2008" stroke="#7ecb78" stroke-width="2" fill="none" stroke-linejoin="round"/><circle cx="159" cy="1766" r="11.3" fill="#85c172" stroke="#7ecb78" stroke-width="1.2"/><circle cx="360" cy="1990.5" r="11.3" fill="#85c172" stroke="#7ecb78" stroke-width="1.2"/><circle cx="568.5" cy="1869.5" r="11.3" fill="#85c172" stroke="#7ecb78" stroke-width="1.2"/><circle cx="769.5" cy="1990.5" r="11.3" fill="#85c172" stroke="#7ecb78" stroke-width="1.2"/><circle cx="977.3" cy="1904.2" r="11.3" fill="#85c172" stroke="#7ecb78" stroke-width="1.2"/><circle cx="1185" cy="2008" r="11.3" fill="#85c172" stroke="#7ecb78" stroke-width="1.2"/></svg>
<span class="t" style="left:16.4px;top:113.4px;font-size:25.0px;line-height:30px;letter-spacing:1.95px;">20</span>
<span class="t" style="left:16.4px;top:199.8px;font-size:25.0px;line-height:30px;letter-spacing:1.95px;">15</span>
<span class="t" style="left:16.4px;top:286.0px;font-size:25.0px;line-height:30px;letter-spacing:1.95px;">10</span>
<span class="t" style="left:32.3px;top:372.2px;font-size:25.0px;line-height:30px;letter-spacing:0.00px;">5</span>
<span class="t" style="left:31.0px;top:419.4px;font-size:25.0px;line-height:30px;letter-spacing:1.62px;">08/22</span>
<span class="t" style="left:132.0px;top:419.4px;font-size:25.0px;line-height:30px;letter-spacing:1.62px;">09/06</span>
<span class="t" style="left:234.8px;top:419.4px;font-size:25.0px;line-height:30px;letter-spacing:0.70px;">09/21</span>
<span class="t" style="left:334.8px;top:419.4px;font-size:25.0px;line-height:30px;letter-spacing:0.70px;">10/06</span>
<span class="t" style="left:437.7px;top:419.4px;font-size:25.0px;line-height:30px;letter-spacing:-0.23px;">10/21</span>
<span class="t" style="left:538.2px;top:419.4px;font-size:25.0px;line-height:30px;letter-spacing:0.23px;">11/05</span>
<span class="t" style="left:638.7px;top:419.4px;font-size:25.0px;line-height:30px;letter-spacing:0.23px;">11/20</span>
<span class="t" style="left:737.8px;top:419.4px;font-size:25.0px;line-height:30px;letter-spacing:0.70px;">12/05</span>
<span class="t" style="left:838.3px;top:419.4px;font-size:25.0px;line-height:30px;letter-spacing:0.70px;">12/20</span>
<span class="t" style="left:938.8px;top:419.4px;font-size:25.0px;line-height:30px;letter-spacing:0.70px;">01/04</span>
<span class="t" style="left:1040.7px;top:419.4px;font-size:25.0px;line-height:30px;letter-spacing:-0.23px;">01/19</span>
<span class="t" style="left:1138.0px;top:419.4px;font-size:25.0px;line-height:30px;letter-spacing:1.62px;">02/03</span>
<span class="t" style="left:1240.8px;top:419.4px;font-size:25.0px;line-height:30px;letter-spacing:0.70px;">02/18</span>
<i class="sw" style="left:23.8px;top:473px;background:#85c172"></i>
<span class="t" style="left:68.1px;top:461.6px;font-size:25.0px;line-height:30px;letter-spacing:0.30px;">PRs Merged w/o Review</span>
<span class="t" style="left:363.6px;top:461.6px;font-size:25.0px;line-height:30px;letter-spacing:0.13px;">Mean: 10.9</span>
</section>
<div class="row" style="left:22px;top:2166px;width:4032px;height:60px;">
<svg class="ic" style="left:16px;top:22px" width="24" height="20" viewBox="38 2188 24 20" ><path d="M44.7 2194.3L50.1 2201L55.5 2194.3" fill="none" stroke="#ccccdc" stroke-width="2.7" stroke-linecap="round" stroke-linejoin="miter"/></svg>
<span class="t m" style="left:44.4px;top:9.1px;font-size:33.5px;line-height:40px;letter-spacing:0.70px;">2. Cycle Time</span>
</div>
<section class="panel" style="left:22px;top:2242px;width:4032px;height:516px;">
<h2 class="t m pt" style="left:16.2px;top:14.6px;font-size:29.3px;line-height:35px;letter-spacing:0.23px;">PR Cycle Time</h2>
<svg class="ic" style="left:247.9px;top:18.6px" width="28" height="28" viewBox="0 0 28 28"><path d="M14.4 5.4H4.3A3.1 3.1 0 0 0 1.2 8.5V22.7A3.1 3.1 0 0 0 4.3 25.8H18.3A3.1 3.1 0 0 0 21.4 22.7V11.9M16.8 1.2H25.5V9.9M25.5 1.2L9.6 17.3" fill="none" stroke="#9697a4" stroke-width="2.25" stroke-linejoin="miter"/></svg>
<svg class="g" width="4028" height="512" viewBox="24 2244 4028 512" ><path d="M93.5 2380.5H4020.6M93.5 2448.5H4020.6M93.5 2515.5H4020.6M93.5 2583.5H4020.6M93.5 2650.5H4020.6M109.5 2340.5V2658.5M215.5 2340.5V2658.5M321.5 2340.5V2658.5M428.5 2340.5V2658.5M535.5 2340.5V2658.5M641.5 2340.5V2658.5M747.5 2340.5V2658.5M854.5 2340.5V2658.5M960.5 2340.5V2658.5M1066.5 2340.5V2658.5M1173.5 2340.5V2658.5M1279.5 2340.5V2658.5M1386.5 2340.5V2658.5M1492.5 2340.5V2658.5M1598.5 2340.5V2658.5M1705.5 2340.5V2658.5M1811.5 2340.5V2658.5M1917.5 2340.5V2658.5M2024.5 2340.5V2658.5M2130.5 2340.5V2658.5M2237.5 2340.5V2658.5M2343.5 2340.5V2658.5M2449.5 2340.5V2658.5M2556.5 2340.5V2658.5M2662.5 2340.5V2658.5M2768.5 2340.5V2658.5M2875.5 2340.5V2658.5M2981.5 2340.5V2658.5M3088.5 2340.5V2658.5M3194.5 2340.5V2658.5M3300.5 2340.5V2658.5M3407.5 2340.5V2658.5M3513.5 2340.5V2658.5M3620.5 2340.5V2658.5M3726.5 2340.5V2658.5M3832.5 2340.5V2658.5M3939.5 2340.5V2658.5" stroke="#2a2c31" stroke-width="1" fill="none" shape-rendering="crispEdges"/><path d="M328 2373.2L967.5 2589L1626.8 2611L2264.4 2608L2924.9 2625.2L3584.3 2626.7" stroke="#6b9df8" stroke-width="2" fill="none" stroke-linejoin="round"/><circle cx="328" cy="2373.2" r="11.3" fill="#6795eb" stroke="#6b9df8" stroke-width="1.2"/><circle cx="967.5" cy="2589" r="11.3" fill="#6795eb" stroke="#6b9df8" stroke-width="1.2"/><circle cx="1626.8" cy="2611" r="11.3" fill="#6795eb" stroke="#6b9df8" stroke-width="1.2"/><circle cx="2264.4" cy="2608" r="11.3" fill="#6795eb" stroke="#6b9df8" stroke-width="1.2"/><circle cx="2924.9" cy="2625.2" r="11.3" fill="#6795eb" stroke="#6b9df8" stroke-width="1.2"/><circle cx="3584.3" cy="2626.7" r="11.3" fill="#6795eb" stroke="#6b9df8" stroke-width="1.2"/></svg>
<span class="t" style="left:14.7px;top:119.1px;font-size:25.0px;line-height:30px;letter-spacing:1.46px;">200</span>
<span class="t" style="left:14.7px;top:187.3px;font-size:25.0px;line-height:30px;letter-spacing:1.46px;">150</span>
<span class="t" style="left:14.7px;top:254.5px;font-size:25.0px;line-height:30px;letter-spacing:1.46px;">100</span>
<span class="t" style="left:29.5px;top:322.3px;font-size:25.0px;line-height:30px;letter-spacing:1.95px;">50</span>
<span class="t" style="left:45.4px;top:389.5px;font-size:25.0px;line-height:30px;letter-spacing:0.00px;">0</span>
<span class="t" style="left:51.0px;top:419.4px;font-size:25.0px;line-height:30px;letter-spacing:1.62px;">08/22</span>
<span class="t" style="left:157.3px;top:419.4px;font-size:25.0px;line-height:30px;letter-spacing:1.62px;">08/27</span>
<span class="t" style="left:264.8px;top:419.4px;font-size:25.0px;line-height:30px;letter-spacing:0.70px;">09/01</span>
<span class="t" style="left:370.1px;top:419.4px;font-size:25.0px;line-height:30px;letter-spacing:1.62px;">09/06</span>
<span class="t" style="left:480.2px;top:419.4px;font-size:25.0px;line-height:30px;letter-spacing:0.23px;">09/11</span>
<span class="t" style="left:584.7px;top:419.4px;font-size:25.0px;line-height:30px;letter-spacing:0.70px;">09/16</span>
<span class="t" style="left:691.1px;top:419.4px;font-size:25.0px;line-height:30px;letter-spacing:0.70px;">09/21</span>
<span class="t" style="left:795.6px;top:419.4px;font-size:25.0px;line-height:30px;letter-spacing:1.62px;">09/26</span>
<span class="t" style="left:905.7px;top:419.4px;font-size:25.0px;line-height:30px;letter-spacing:-0.23px;">10/01</span>
<span class="t" style="left:1010.2px;top:419.4px;font-size:25.0px;line-height:30px;letter-spacing:0.70px;">10/06</span>
<span class="t" style="left:1120.3px;top:419.4px;font-size:25.0px;line-height:30px;letter-spacing:-0.69px;">10/11</span>
<span class="t" style="left:1224.8px;top:419.4px;font-size:25.0px;line-height:30px;letter-spacing:-0.23px;">10/16</span>
<span class="t" style="left:1331.2px;top:419.4px;font-size:25.0px;line-height:30px;letter-spacing:-0.23px;">10/21</span>
<span class="t" style="left:1435.7px;top:419.4px;font-size:25.0px;line-height:30px;letter-spacing:0.70px;">10/26</span>
<span class="t" style="left:1544.0px;top:419.4px;font-size:25.0px;line-height:30px;letter-spacing:-0.23px;">10/31</span>
<span class="t" style="left:1650.3px;top:419.4px;font-size:25.0px;line-height:30px;letter-spacing:0.23px;">11/05</span>
<span class="t" style="left:1758.6px;top:419.4px;font-size:25.0px;line-height:30px;letter-spacing:-0.69px;">11/10</span>
<span class="t" style="left:1864.9px;top:419.4px;font-size:25.0px;line-height:30px;letter-spacing:-0.69px;">11/15</span>
<span class="t" style="left:1969.5px;top:419.4px;font-size:25.0px;line-height:30px;letter-spacing:0.23px;">11/20</span>
<span class="t" style="left:2075.9px;top:419.4px;font-size:25.0px;line-height:30px;letter-spacing:0.23px;">11/25</span>
<span class="t" style="left:2182.2px;top:419.4px;font-size:25.0px;line-height:30px;letter-spacing:0.23px;">11/30</span>
<span class="t" style="left:2286.8px;top:419.4px;font-size:25.0px;line-height:30px;letter-spacing:0.70px;">12/05</span>
<span class="t" style="left:2395.0px;top:419.4px;font-size:25.0px;line-height:30px;letter-spacing:-0.23px;">12/10</span>
<span class="t" style="left:2501.4px;top:419.4px;font-size:25.0px;line-height:30px;letter-spacing:-0.23px;">12/15</span>
<span class="t" style="left:2605.9px;top:419.4px;font-size:25.0px;line-height:30px;letter-spacing:0.70px;">12/20</span>
<span class="t" style="left:2712.3px;top:419.4px;font-size:25.0px;line-height:30px;letter-spacing:0.70px;">12/25</span>
<span class="t" style="left:2818.7px;top:419.4px;font-size:25.0px;line-height:30px;letter-spacing:0.70px;">12/30</span>
<span class="t" style="left:2925.0px;top:419.4px;font-size:25.0px;line-height:30px;letter-spacing:0.70px;">01/04</span>
<span class="t" style="left:3031.4px;top:419.4px;font-size:25.0px;line-height:30px;letter-spacing:0.70px;">01/09</span>
<span class="t" style="left:3139.7px;top:419.4px;font-size:25.0px;line-height:30px;letter-spacing:-0.23px;">01/14</span>
<span class="t" style="left:3246.0px;top:419.4px;font-size:25.0px;line-height:30px;letter-spacing:-0.23px;">01/19</span>
<span class="t" style="left:3350.6px;top:419.4px;font-size:25.0px;line-height:30px;letter-spacing:0.70px;">01/24</span>
<span class="t" style="left:3456.9px;top:419.4px;font-size:25.0px;line-height:30px;letter-spacing:0.70px;">01/29</span>
<span class="t" style="left:3561.5px;top:419.4px;font-size:25.0px;line-height:30px;letter-spacing:1.62px;">02/03</span>
<span class="t" style="left:3667.9px;top:419.4px;font-size:25.0px;line-height:30px;letter-spacing:1.62px;">02/08</span>
<span class="t" style="left:3776.1px;top:419.4px;font-size:25.0px;line-height:30px;letter-spacing:0.70px;">02/13</span>
<span class="t" style="left:3882.5px;top:419.4px;font-size:25.0px;line-height:30px;letter-spacing:0.70px;">02/18</span>
<i class="sw" style="left:23.8px;top:473px;background:#6795eb"></i>
<span class="t" style="left:67.6px;top:461.6px;font-size:25.0px;line-height:30px;letter-spacing:0.23px;">PR Cycle Time(h)</span>
<span class="t" style="left:283.1px;top:461.6px;font-size:25.0px;line-height:30px;letter-spacing:-0.04px;">Mean: 57.5</span>
</section>
<section class="panel" style="left:22px;top:2774px;width:996px;height:516px;">
<h2 class="t m pt" style="left:16.2px;top:14.6px;font-size:29.3px;line-height:35px;letter-spacing:0.36px;">PR Coding Time</h2>
<svg class="ic" style="left:269.4px;top:18.6px" width="28" height="28" viewBox="0 0 28 28"><path d="M14.4 5.4H4.3A3.1 3.1 0 0 0 1.2 8.5V22.7A3.1 3.1 0 0 0 4.3 25.8H18.3A3.1 3.1 0 0 0 21.4 22.7V11.9M16.8 1.2H25.5V9.9M25.5 1.2L9.6 17.3" fill="none" stroke="#9697a4" stroke-width="2.25" stroke-linejoin="miter"/></svg>
<svg class="g" width="992" height="512" viewBox="24 2776 992 512" ><path d="M80 2961.5H985M80 3071.5H985M80 3182.5H985M138.5 2872.5V3190.5M284.5 2872.5V3190.5M435.5 2872.5V3190.5M581.5 2872.5V3190.5M732.5 2872.5V3190.5M884.5 2872.5V3190.5" stroke="#2a2c31" stroke-width="1" fill="none" shape-rendering="crispEdges"/><path d="M139 2966L285 3149L436 3056.5L582.5 2906L733.5 3102.5L884.5 3126.5" stroke="#6b9df8" stroke-width="2" fill="none" stroke-linejoin="round"/><circle cx="139" cy="2966" r="11.3" fill="#6795eb" stroke="#6b9df8" stroke-width="1.2"/><circle cx="285" cy="3149" r="11.3" fill="#6795eb" stroke="#6b9df8" stroke-width="1.2"/><circle cx="436" cy="3056.5" r="11.3" fill="#6795eb" stroke="#6b9df8" stroke-width="1.2"/><circle cx="582.5" cy="2906" r="11.3" fill="#6795eb" stroke="#6b9df8" stroke-width="1.2"/><circle cx="733.5" cy="3102.5" r="11.3" fill="#6795eb" stroke="#6b9df8" stroke-width="1.2"/><circle cx="884.5" cy="3126.5" r="11.3" fill="#6795eb" stroke="#6b9df8" stroke-width="1.2"/></svg>
<span class="t" style="left:16.0px;top:168.4px;font-size:25.0px;line-height:30px;letter-spacing:1.95px;">20</span>
<span class="t" style="left:16.0px;top:278.5px;font-size:25.0px;line-height:30px;letter-spacing:1.95px;">10</span>
<span class="t" style="left:31.9px;top:389.5px;font-size:25.0px;line-height:30px;letter-spacing:0.00px;">0</span>
<span class="t" style="left:81.8px;top:419.4px;font-size:25.0px;line-height:30px;letter-spacing:0.70px;">09/01</span>
<span class="t" style="left:229.7px;top:419.4px;font-size:25.0px;line-height:30px;letter-spacing:-0.23px;">10/01</span>
<span class="t" style="left:382.5px;top:419.4px;font-size:25.0px;line-height:30px;letter-spacing:-0.69px;">11/01</span>
<span class="t" style="left:526.7px;top:419.4px;font-size:25.0px;line-height:30px;letter-spacing:-0.23px;">12/01</span>
<span class="t" style="left:677.7px;top:419.4px;font-size:25.0px;line-height:30px;letter-spacing:-0.23px;">01/01</span>
<span class="t" style="left:827.3px;top:419.4px;font-size:25.0px;line-height:30px;letter-spacing:0.70px;">02/01</span>
<i class="sw" style="left:23.8px;top:473px;background:#6795eb"></i>
<span class="t" style="left:67.6px;top:461.6px;font-size:25.0px;line-height:30px;letter-spacing:0.64px;">Coding Time(h)</span>
<span class="t" style="left:263.1px;top:461.6px;font-size:25.0px;line-height:30px;letter-spacing:-0.22px;">Mean: 11.8</span>
</section>
<section class="panel" style="left:1034px;top:2774px;width:996px;height:516px;">
<h2 class="t m pt" style="left:16.2px;top:14.6px;font-size:29.3px;line-height:35px;letter-spacing:0.28px;">PR Pickup Time</h2>
<svg class="ic" style="left:263.4px;top:18.6px" width="28" height="28" viewBox="0 0 28 28"><path d="M14.4 5.4H4.3A3.1 3.1 0 0 0 1.2 8.5V22.7A3.1 3.1 0 0 0 4.3 25.8H18.3A3.1 3.1 0 0 0 21.4 22.7V11.9M16.8 1.2H25.5V9.9M25.5 1.2L9.6 17.3" fill="none" stroke="#9697a4" stroke-width="2.25" stroke-linejoin="miter"/></svg>
<svg class="g" width="992" height="512" viewBox="1036 2776 992 512" ><path d="M1095 2920.5H1996.5M1095 2989.5H1996.5M1095 3058.5H1996.5M1095 3127.5H1996.5M1152.5 2872.5V3190.5M1297.5 2872.5V3190.5M1448.5 2872.5V3190.5M1594.5 2872.5V3190.5M1745.5 2872.5V3190.5M1896.5 2872.5V3190.5" stroke="#2a2c31" stroke-width="1" fill="none" shape-rendering="crispEdges"/><path d="M1153 2897.5L1299 2994L1450 3054L1595.5 3038L1746.5 3115.5L1897.5 3154.5" stroke="#6b9df8" stroke-width="2" fill="none" stroke-linejoin="round"/><circle cx="1153" cy="2897.5" r="11.3" fill="#6795eb" stroke="#6b9df8" stroke-width="1.2"/><circle cx="1299" cy="2994" r="11.3" fill="#6795eb" stroke="#6b9df8" stroke-width="1.2"/><circle cx="1450" cy="3054" r="11.3" fill="#6795eb" stroke="#6b9df8" stroke-width="1.2"/><circle cx="1595.5" cy="3038" r="11.3" fill="#6795eb" stroke="#6b9df8" stroke-width="1.2"/><circle cx="1746.5" cy="3115.5" r="11.3" fill="#6795eb" stroke="#6b9df8" stroke-width="1.2"/><circle cx="1897.5" cy="3154.5" r="11.3" fill="#6795eb" stroke="#6b9df8" stroke-width="1.2"/></svg>
<span class="t" style="left:19.0px;top:127.4px;font-size:25.0px;line-height:30px;letter-spacing:1.95px;">40</span>
<span class="t" style="left:19.0px;top:196.4px;font-size:25.0px;line-height:30px;letter-spacing:1.95px;">30</span>
<span class="t" style="left:19.0px;top:265.4px;font-size:25.0px;line-height:30px;letter-spacing:1.95px;">20</span>
<span class="t" style="left:19.0px;top:334.4px;font-size:25.0px;line-height:30px;letter-spacing:1.95px;">10</span>
<span class="t" style="left:83.8px;top:419.4px;font-size:25.0px;line-height:30px;letter-spacing:0.70px;">09/01</span>
<span class="t" style="left:230.7px;top:419.4px;font-size:25.0px;line-height:30px;letter-spacing:-0.23px;">10/01</span>
<span class="t" style="left:383.5px;top:419.4px;font-size:25.0px;line-height:30px;letter-spacing:-0.69px;">11/01</span>
<span class="t" style="left:527.7px;top:419.4px;font-size:25.0px;line-height:30px;letter-spacing:-0.23px;">12/01</span>
<span class="t" style="left:678.2px;top:419.4px;font-size:25.0px;line-height:30px;letter-spacing:-0.23px;">01/01</span>
<span class="t" style="left:827.3px;top:419.4px;font-size:25.0px;line-height:30px;letter-spacing:0.70px;">02/01</span>
<i class="sw" style="left:24px;top:473px;background:#6795eb"></i>
<span class="t" style="left:68.1px;top:461.6px;font-size:25.0px;line-height:30px;letter-spacing:0.50px;">Pickup Time(h)</span>
<span class="t" style="left:257.6px;top:461.6px;font-size:25.0px;line-height:30px;letter-spacing:0.46px;">Mean: 22.3</span>
</section>
<section class="panel" style="left:2046px;top:2774px;width:996px;height:516px;">
<h2 class="t m pt" style="left:16.2px;top:14.6px;font-size:29.3px;line-height:35px;letter-spacing:0.08px;">PR Review Time</h2>
<svg class="ic" style="left:268.9px;top:18.6px" width="28" height="28" viewBox="0 0 28 28"><path d="M14.4 5.4H4.3A3.1 3.1 0 0 0 1.2 8.5V22.7A3.1 3.1 0 0 0 4.3 25.8H18.3A3.1 3.1 0 0 0 21.4 22.7V11.9M16.8 1.2H25.5V9.9M25.5 1.2L9.6 17.3" fill="none" stroke="#9697a4" stroke-width="2.25" stroke-linejoin="miter"/></svg>
<svg class="g" width="992" height="512" viewBox="2048 2776 992 512" ><path d="M2106.5 2914.5H3008.5M2106.5 3006.5H3008.5M2106.5 3099.5H3008.5M2164.5 2872.5V3190.5M2309.5 2872.5V3190.5M2460.5 2872.5V3190.5M2606.5 2872.5V3190.5M2756.5 2872.5V3190.5M2907.5 2872.5V3190.5" stroke="#2a2c31" stroke-width="1" fill="none" shape-rendering="crispEdges"/><path d="M2165 2900L2311 3118L2462 3092L2607.5 3112.5L2758.5 3153.5L2909.5 3155.5" stroke="#6b9df8" stroke-width="2" fill="none" stroke-linejoin="round"/><circle cx="2165" cy="2900" r="11.3" fill="#6795eb" stroke="#6b9df8" stroke-width="1.2"/><circle cx="2311" cy="3118" r="11.3" fill="#6795eb" stroke="#6b9df8" stroke-width="1.2"/><circle cx="2462" cy="3092" r="11.3" fill="#6795eb" stroke="#6b9df8" stroke-width="1.2"/><circle cx="2607.5" cy="3112.5" r="11.3" fill="#6795eb" stroke="#6b9df8" stroke-width="1.2"/><circle cx="2758.5" cy="3153.5" r="11.3" fill="#6795eb" stroke="#6b9df8" stroke-width="1.2"/><circle cx="2909.5" cy="3155.5" r="11.3" fill="#6795eb" stroke="#6b9df8" stroke-width="1.2"/></svg>
<span class="t" style="left:18.5px;top:121.4px;font-size:25.0px;line-height:30px;letter-spacing:1.95px;">60</span>
<span class="t" style="left:18.5px;top:213.4px;font-size:25.0px;line-height:30px;letter-spacing:1.95px;">40</span>
<span class="t" style="left:18.5px;top:306.4px;font-size:25.0px;line-height:30px;letter-spacing:1.95px;">20</span>
<span class="t" style="left:83.8px;top:419.4px;font-size:25.0px;line-height:30px;letter-spacing:0.70px;">09/01</span>
<span class="t" style="left:230.7px;top:419.4px;font-size:25.0px;line-height:30px;letter-spacing:-0.23px;">10/01</span>
<span class="t" style="left:383.5px;top:419.4px;font-size:25.0px;line-height:30px;letter-spacing:-0.69px;">11/01</span>
<span class="t" style="left:527.7px;top:419.4px;font-size:25.0px;line-height:30px;letter-spacing:-0.23px;">12/01</span>
<span class="t" style="left:677.7px;top:419.4px;font-size:25.0px;line-height:30px;letter-spacing:-0.23px;">01/01</span>
<span class="t" style="left:826.8px;top:419.4px;font-size:25.0px;line-height:30px;letter-spacing:0.70px;">02/01</span>
<i class="sw" style="left:24px;top:473px;background:#6795eb"></i>
<span class="t" style="left:68.1px;top:461.6px;font-size:25.0px;line-height:30px;letter-spacing:0.35px;">Review Time(h)</span>
<span class="t" style="left:263.1px;top:461.6px;font-size:25.0px;line-height:30px;letter-spacing:0.46px;">Mean: 22.3</span>
</section>
<section class="panel" style="left:3058px;top:2774px;width:996px;height:516px;">
<h2 class="t m pt" style="left:16.2px;top:14.6px;font-size:29.3px;line-height:35px;letter-spacing:0.22px;">PR Deploy Time</h2>
<svg class="ic" style="left:265.9px;top:18.6px" width="28" height="28" viewBox="0 0 28 28"><path d="M14.4 5.4H4.3A3.1 3.1 0 0 0 1.2 8.5V22.7A3.1 3.1 0 0 0 4.3 25.8H18.3A3.1 3.1 0 0 0 21.4 22.7V11.9M16.8 1.2H25.5V9.9M25.5 1.2L9.6 17.3" fill="none" stroke="#9697a4" stroke-width="2.25" stroke-linejoin="miter"/></svg>
<svg class="g" width="992" height="512" viewBox="3060 2776 992 512" ><path d="M3129 2944.5H4021M3129 3063.5H4021M3129 3182.5H4021M3185.5 2872.5V3190.5M3329.5 2872.5V3190.5M3478.5 2872.5V3190.5M3623.5 2872.5V3190.5M3772.5 2872.5V3190.5M3921.5 2872.5V3190.5" stroke="#2a2c31" stroke-width="1" fill="none" shape-rendering="crispEdges"/><path d="M3187 2903.5L3331 3130L3480.5 3158.5L3624 3175L3773.5 3174L3922.5 3180" stroke="#6b9df8" stroke-width="2" fill="none" stroke-linejoin="round"/><circle cx="3187" cy="2903.5" r="11.3" fill="#6795eb" stroke="#6b9df8" stroke-width="1.2"/><circle cx="3331" cy="3130" r="11.3" fill="#6795eb" stroke="#6b9df8" stroke-width="1.2"/><circle cx="3480.5" cy="3158.5" r="11.3" fill="#6795eb" stroke="#6b9df8" stroke-width="1.2"/><circle cx="3624" cy="3175" r="11.3" fill="#6795eb" stroke="#6b9df8" stroke-width="1.2"/><circle cx="3773.5" cy="3174" r="11.3" fill="#6795eb" stroke="#6b9df8" stroke-width="1.2"/><circle cx="3922.5" cy="3180" r="11.3" fill="#6795eb" stroke="#6b9df8" stroke-width="1.2"/></svg>
<span class="t" style="left:14.2px;top:151.4px;font-size:25.0px;line-height:30px;letter-spacing:1.46px;">100</span>
<span class="t" style="left:29.0px;top:270.4px;font-size:25.0px;line-height:30px;letter-spacing:1.95px;">50</span>
<span class="t" style="left:44.9px;top:389.5px;font-size:25.0px;line-height:30px;letter-spacing:0.00px;">0</span>
<span class="t" style="left:92.8px;top:419.4px;font-size:25.0px;line-height:30px;letter-spacing:0.70px;">09/01</span>
<span class="t" style="left:238.7px;top:419.4px;font-size:25.0px;line-height:30px;letter-spacing:-0.23px;">10/01</span>
<span class="t" style="left:389.5px;top:419.4px;font-size:25.0px;line-height:30px;letter-spacing:-0.69px;">11/01</span>
<span class="t" style="left:532.2px;top:419.4px;font-size:25.0px;line-height:30px;letter-spacing:-0.23px;">12/01</span>
<span class="t" style="left:681.2px;top:419.4px;font-size:25.0px;line-height:30px;letter-spacing:-0.23px;">01/01</span>
<span class="t" style="left:828.3px;top:419.4px;font-size:25.0px;line-height:30px;letter-spacing:0.70px;">02/01</span>
<i class="sw" style="left:24px;top:473px;background:#6795eb"></i>
<span class="t" style="left:68.1px;top:461.6px;font-size:25.0px;line-height:30px;letter-spacing:0.16px;">PR Deploy Time(h)</span>
<span class="t" style="left:298.6px;top:461.6px;font-size:25.0px;line-height:30px;letter-spacing:0.41px;">Mean: 26.0</span>
</section>
<section class="panel" style="left:22px;top:3306px;width:4032px;height:136px;">
<span class="t" style="left:16.2px;top:64.2px;font-size:29.3px;line-height:35px;letter-spacing:0.62px;">This dashboard is created based on this</span>
<a class="t" href="#" style="left:565.6px;top:64.2px;font-size:29.3px;line-height:35px;letter-spacing:0.62px;color:#6e9fff;">data schema</a>
<span class="t" style="left:738.5px;top:64.2px;font-size:29.3px;line-height:35px;letter-spacing:0.55px;">. Want to add more metrics? Please follow the</span>
<a class="t" href="#" style="left:1365.0px;top:64.2px;font-size:29.3px;line-height:35px;letter-spacing:0.84px;color:#6e9fff;">guide</a>
<span class="t" style="left:1441.0px;top:64.2px;font-size:29.3px;line-height:35px;letter-spacing:0.00px;">.</span>
</section>
</div></body></html>
